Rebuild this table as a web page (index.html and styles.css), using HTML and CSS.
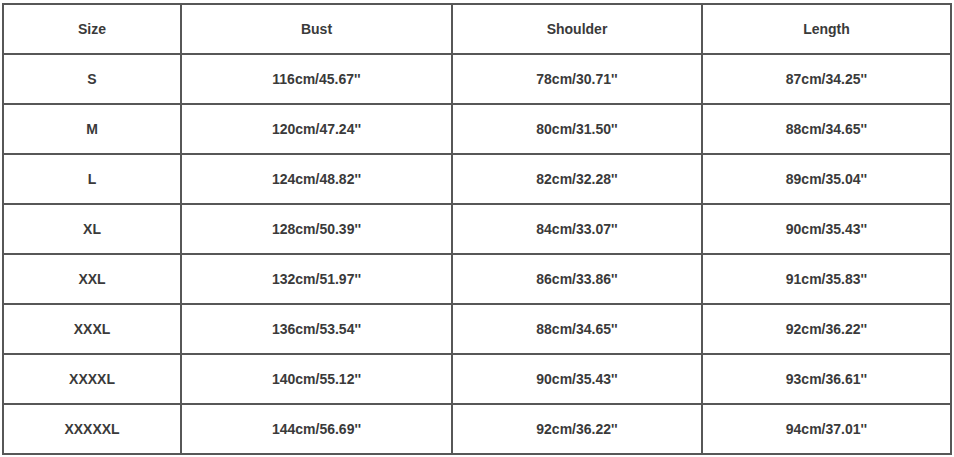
FILE: index.html
```html
<!DOCTYPE html>
<html>
<head>
<meta charset="utf-8">
<link rel="stylesheet" href="styles.css">
</head>
<body>
<table class="sizes">
  <colgroup>
    <col class="c1"><col class="c2"><col class="c3"><col class="c4">
  </colgroup>
  <tr><td>Size</td><td>Bust</td><td>Shoulder</td><td>Length</td></tr>
  <tr><td>S</td><td>116cm/45.67''</td><td>78cm/30.71''</td><td>87cm/34.25''</td></tr>
  <tr><td>M</td><td>120cm/47.24''</td><td>80cm/31.50''</td><td>88cm/34.65''</td></tr>
  <tr><td>L</td><td>124cm/48.82''</td><td>82cm/32.28''</td><td>89cm/35.04''</td></tr>
  <tr><td>XL</td><td>128cm/50.39''</td><td>84cm/33.07''</td><td>90cm/35.43''</td></tr>
  <tr><td>XXL</td><td>132cm/51.97''</td><td>86cm/33.86''</td><td>91cm/35.83''</td></tr>
  <tr><td>XXXL</td><td>136cm/53.54''</td><td>88cm/34.65''</td><td>92cm/36.22''</td></tr>
  <tr><td>XXXXL</td><td>140cm/55.12''</td><td>90cm/35.43''</td><td>93cm/36.61''</td></tr>
  <tr><td>XXXXXL</td><td>144cm/56.69''</td><td>92cm/36.22''</td><td>94cm/37.01''</td></tr>
</table>
</body>
</html>
```
FILE: styles.css
```css
html, body {
  margin: 0;
  padding: 0;
  background: #ffffff;
}
body {
  padding: 3px 0 0 2px;
}
.sizes {
  border-collapse: collapse;
  table-layout: fixed;
  width: 950px;
  font-family: "Liberation Sans", Arial, sans-serif;
  font-weight: bold;
  font-size: 14px;
  color: #3a3a3a;
}
.c1 { width: 178px; }
.c2 { width: 271px; }
.c3 { width: 250px; }
.c4 { width: 249px; }
.sizes td {
  border: 2px solid #575757;
  height: 48px;
  padding: 0;
  text-align: center;
  vertical-align: middle;
}
```
